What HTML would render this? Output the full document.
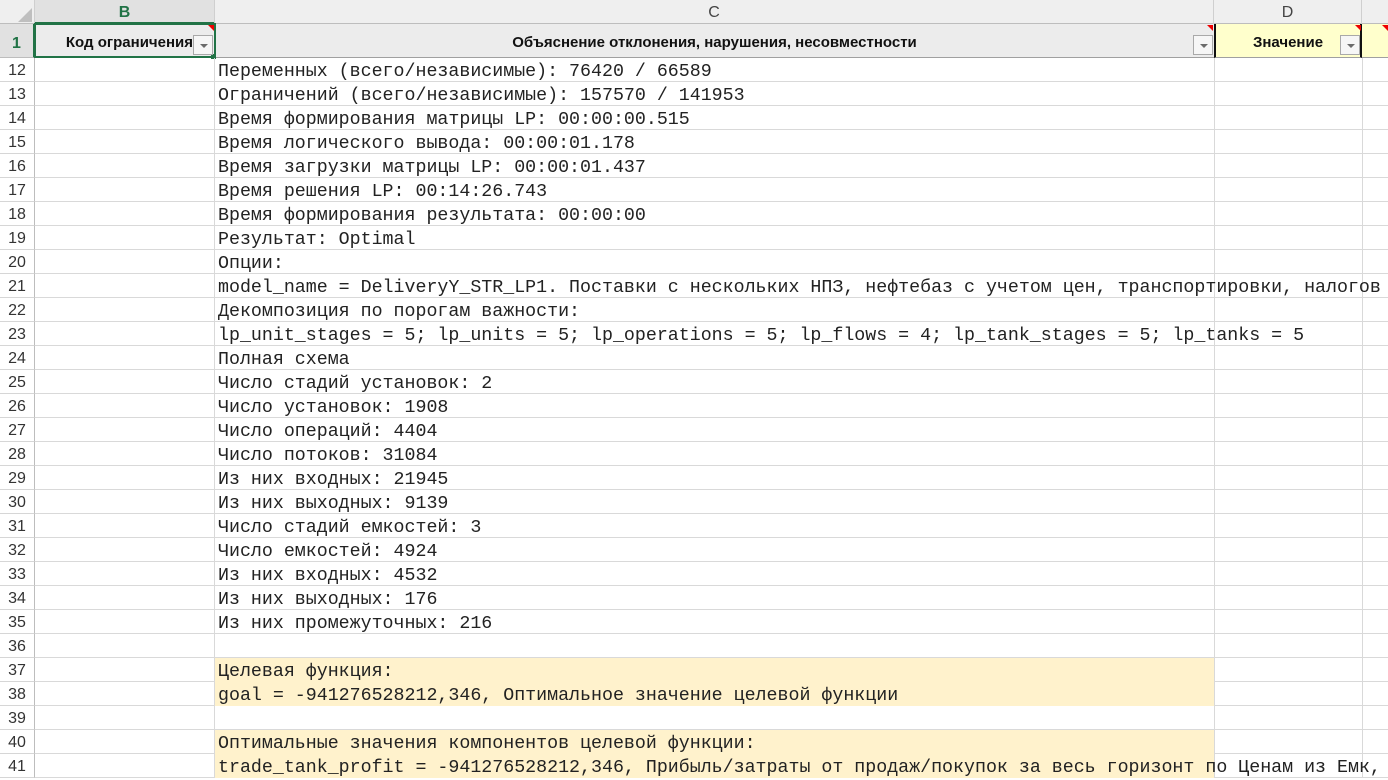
<!DOCTYPE html>
<html><head><meta charset="utf-8"><style>
body{margin:0;width:1388px;height:779px;overflow:hidden;background:#fff;position:relative;font-family:"Liberation Sans",sans-serif}
.a{position:absolute;box-sizing:border-box}
.rn{left:0;width:35px;height:24px;border-right:1px solid #bdbdbd;border-bottom:1px solid #d6d6d6;background:#fff;color:#333;font-size:16px;text-align:center;line-height:26px}
.t{left:218px;font-family:"Liberation Mono",monospace;font-size:18.3px;line-height:24px;white-space:nowrap;color:#222}
.hl{left:215px;width:999px;height:24px;background:#fff2cc}
.dd{width:20px;height:20px;border:1px solid #a9a9a9;background:#f6f6f6}
.dd:after{content:"";position:absolute;left:6px;top:8px;border-left:4px solid transparent;border-right:4px solid transparent;border-top:4px solid #6b6b6b}
.red{width:0;height:0;border-left:6px solid transparent;border-top:6px solid #e00}
</style></head><body>
<div class="a" style="left:0;top:0;width:1388px;height:24px;background:#efefef;border-bottom:1px solid #bdbdbd"></div>
<div class="a" style="left:35px;top:0;width:180px;height:24px;background:#e1e1e1;border-bottom:2px solid #217346"></div>
<div class="a" style="left:0;top:0;width:35px;height:24px;border-right:1px solid #cfcfcf"></div>
<div class="a" style="left:18px;top:8px;width:0;height:0;border-left:14px solid transparent;border-bottom:14px solid #bfbfbf"></div>
<div class="a" style="left:35px;top:0;width:180px;height:24px;text-align:center;line-height:26px;font-size:16px;color:#217346;font-weight:bold;border-right:1px solid #cfcfcf">B</div>
<div class="a" style="left:215px;top:0;width:999px;height:24px;text-align:center;line-height:26px;font-size:16px;color:#444;border-right:1px solid #cfcfcf">C</div>
<div class="a" style="left:1214px;top:0;width:148px;height:24px;text-align:center;line-height:26px;font-size:16px;color:#444;border-right:1px solid #cfcfcf">D</div>
<div class="a" style="left:0;top:24px;width:35px;height:34px;background:#e1e1e1;border-right:2px solid #217346;border-bottom:1px solid #bdbdbd;color:#217346;font-weight:bold;font-size:16px;text-align:center;line-height:40px">1</div>
<div class="a" style="left:35px;top:24px;width:1180px;height:34px;background:#ececec;border-bottom:1px solid #a0a0a0"></div>
<div class="a" style="left:1214px;top:24px;width:148px;height:34px;background:#ffffcc;border-bottom:1px solid #a0a0a0;border-left:2px solid #111;border-right:2px solid #111"></div>
<div class="a" style="left:1362px;top:24px;width:26px;height:34px;background:#ffffcc;border-bottom:1px solid #a0a0a0"></div>
<div class="a" style="left:34px;top:23px;width:182px;height:35px;border:2px solid #217346"></div>
<div class="a" style="left:211px;top:54px;width:5px;height:5px;background:#217346"></div>
<div class="a" style="left:35px;top:24px;width:160px;height:34px;font-weight:bold;font-size:15px;line-height:37px;text-align:right;padding-right:2px;color:#111;white-space:nowrap">Код ограничения</div>
<div class="a" style="left:215px;top:24px;width:999px;height:34px;font-weight:bold;font-size:15px;line-height:37px;text-align:center;color:#111">Объяснение отклонения, нарушения, несовместности</div>
<div class="a" style="left:1214px;top:24px;width:148px;height:34px;font-weight:bold;font-size:15px;line-height:37px;text-align:center;color:#111">Значение</div>
<div class="a dd" style="left:193px;top:35px"></div>
<div class="a dd" style="left:1193px;top:35px"></div>
<div class="a dd" style="left:1340px;top:35px"></div>
<div class="a red" style="left:208px;top:25px"></div>
<div class="a red" style="left:1207px;top:25px"></div>
<div class="a red" style="left:1355px;top:25px"></div>
<div class="a red" style="left:1382px;top:25px"></div>
<div id="rows"></div>
<script>
var L=["Переменных (всего/независимые): 76420 / 66589","Ограничений (всего/независимые): 157570 / 141953","Время формирования матрицы LP: 00:00:00.515","Время логического вывода: 00:00:01.178","Время загрузки матрицы LP: 00:00:01.437","Время решения LP: 00:14:26.743","Время формирования результата: 00:00:00","Результат: Optimal","Опции:","model_name = DeliveryY_STR_LP1. Поставки с нескольких НПЗ, нефтебаз с учетом цен, транспортировки, налогов","Декомпозиция по порогам важности:","lp_unit_stages = 5; lp_units = 5; lp_operations = 5; lp_flows = 4; lp_tank_stages = 5; lp_tanks = 5","Полная схема","Число стадий установок: 2","Число установок: 1908","Число операций: 4404","Число потоков: 31084","Из них входных: 21945","Из них выходных: 9139","Число стадий емкостей: 3","Число емкостей: 4924","Из них входных: 4532","Из них выходных: 176","Из них промежуточных: 216","","Целевая функция:","goal = -941276528212,346, Оптимальное значение целевой функции","","Оптимальные значения компонентов целевой функции:","trade_tank_profit = -941276528212,346, Прибыль/затраты от продаж/покупок за весь горизонт по Ценам из Емк,"];
var h="";
for(var i=0;i<30;i++){var y=58+i*24;var n=12+i;
h+='<div class="a" style="left:35px;top:'+y+'px;width:1353px;height:24px;border-bottom:1px solid #d9d9d9"></div>';
h+='<div class="a" style="left:214px;top:'+y+'px;width:1px;height:24px;background:#d9d9d9"></div>';
h+='<div class="a" style="left:1214px;top:'+y+'px;width:1px;height:24px;background:#d9d9d9"></div>';
h+='<div class="a" style="left:1362px;top:'+y+'px;width:1px;height:24px;background:#d9d9d9"></div>';
if(n==37||n==38||n==40||n==41)h+='<div class="a hl" style="top:'+(n==37||n==40?y:y-1)+'px;height:'+(n==37||n==40?24:25)+'px"></div>';
h+='<div class="a rn" style="top:'+y+'px">'+n+'</div>';
h+='<div class="a t" style="top:'+(y+2)+'px">'+L[i]+'</div>';}
document.getElementById("rows").innerHTML=h;
</script>
</body></html>
